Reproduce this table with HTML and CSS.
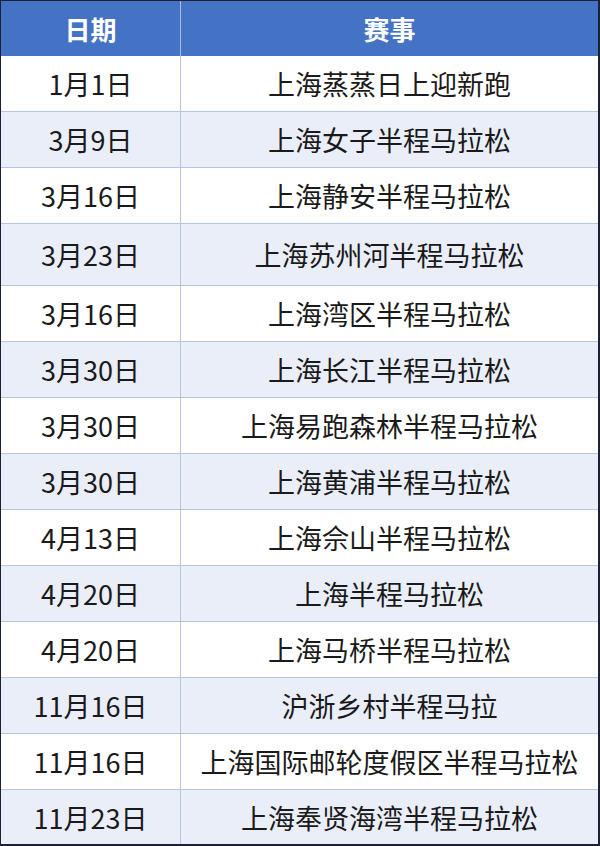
FILE: index.html
```html
<!DOCTYPE html>
<html lang="zh-CN">
<head>
<meta charset="utf-8">
<title>上海半程马拉松赛事</title>
<link rel="stylesheet" href="styles.css">
</head>
<body>
<div class="frame">
<table class="races">
  <thead>
    <tr class="head"><th class="c-date">日期</th><th class="c-name">赛事</th></tr>
  </thead>
  <tbody>
    <tr><td class="c-date">1月1日</td><td class="c-name">上海蒸蒸日上迎新跑</td></tr>
    <tr class="alt"><td class="c-date">3月9日</td><td class="c-name">上海女子半程马拉松</td></tr>
    <tr><td class="c-date">3月16日</td><td class="c-name">上海静安半程马拉松</td></tr>
    <tr class="alt tall"><td class="c-date">3月23日</td><td class="c-name">上海苏州河半程马拉松</td></tr>
    <tr><td class="c-date">3月16日</td><td class="c-name">上海湾区半程马拉松</td></tr>
    <tr class="alt"><td class="c-date">3月30日</td><td class="c-name">上海长江半程马拉松</td></tr>
    <tr><td class="c-date">3月30日</td><td class="c-name">上海易跑森林半程马拉松</td></tr>
    <tr class="alt"><td class="c-date">3月30日</td><td class="c-name">上海黄浦半程马拉松</td></tr>
    <tr><td class="c-date">4月13日</td><td class="c-name">上海佘山半程马拉松</td></tr>
    <tr class="alt"><td class="c-date">4月20日</td><td class="c-name">上海半程马拉松</td></tr>
    <tr><td class="c-date">4月20日</td><td class="c-name">上海马桥半程马拉松</td></tr>
    <tr class="alt"><td class="c-date">11月16日</td><td class="c-name">沪浙乡村半程马拉</td></tr>
    <tr><td class="c-date">11月16日</td><td class="c-name">上海国际邮轮度假区半程马拉松</td></tr>
    <tr class="alt last"><td class="c-date">11月23日</td><td class="c-name">上海奉贤海湾半程马拉松</td></tr>
  </tbody>
</table>
</div>
</body>
</html>
```

FILE: styles.css
```css
html, body {
  margin: 0;
  padding: 0;
  background: #ffffff;
}

.frame {
  width: 600px;
  height: 846px;
  box-sizing: border-box;
  border-style: solid;
  border-color: #1c2233;
  border-width: 1px 2px 2px 1px;
  overflow: hidden;
}

.races {
  width: 100%;
  border-collapse: separate;
  border-spacing: 0;
  table-layout: fixed;
  font-family: "Noto Sans CJK SC", "Noto Sans", sans-serif;
  font-size: 27px;
  color: #1a1a1a;
}

.races th,
.races td {
  padding: 0;
  text-align: center;
  vertical-align: middle;
  line-height: 1;
  white-space: nowrap;
}

.races .c-date {
  width: 179px;
  border-right: 1px solid #b7c5e2;
}

.races .head {
  height: 55px;
  background: #4472c4;
}

.races .head th {
  color: #ffffff;
  font-weight: 700;
  font-size: 26px;
}

.races .head .c-date {
  border-right-color: #a9bde6;
}

.races tbody tr {
  height: 56px;
  background: #ffffff;
}

.races tbody td {
  border-bottom: 1px solid #b7c5e2;
}

.races tbody tr.alt {
  background: #e9eef9;
}

.races tbody tr.tall {
  height: 62px;
}

.races tbody tr.last {
  height: 54px;
}

.races tbody tr.last td {
  border-bottom: none;
}
```
